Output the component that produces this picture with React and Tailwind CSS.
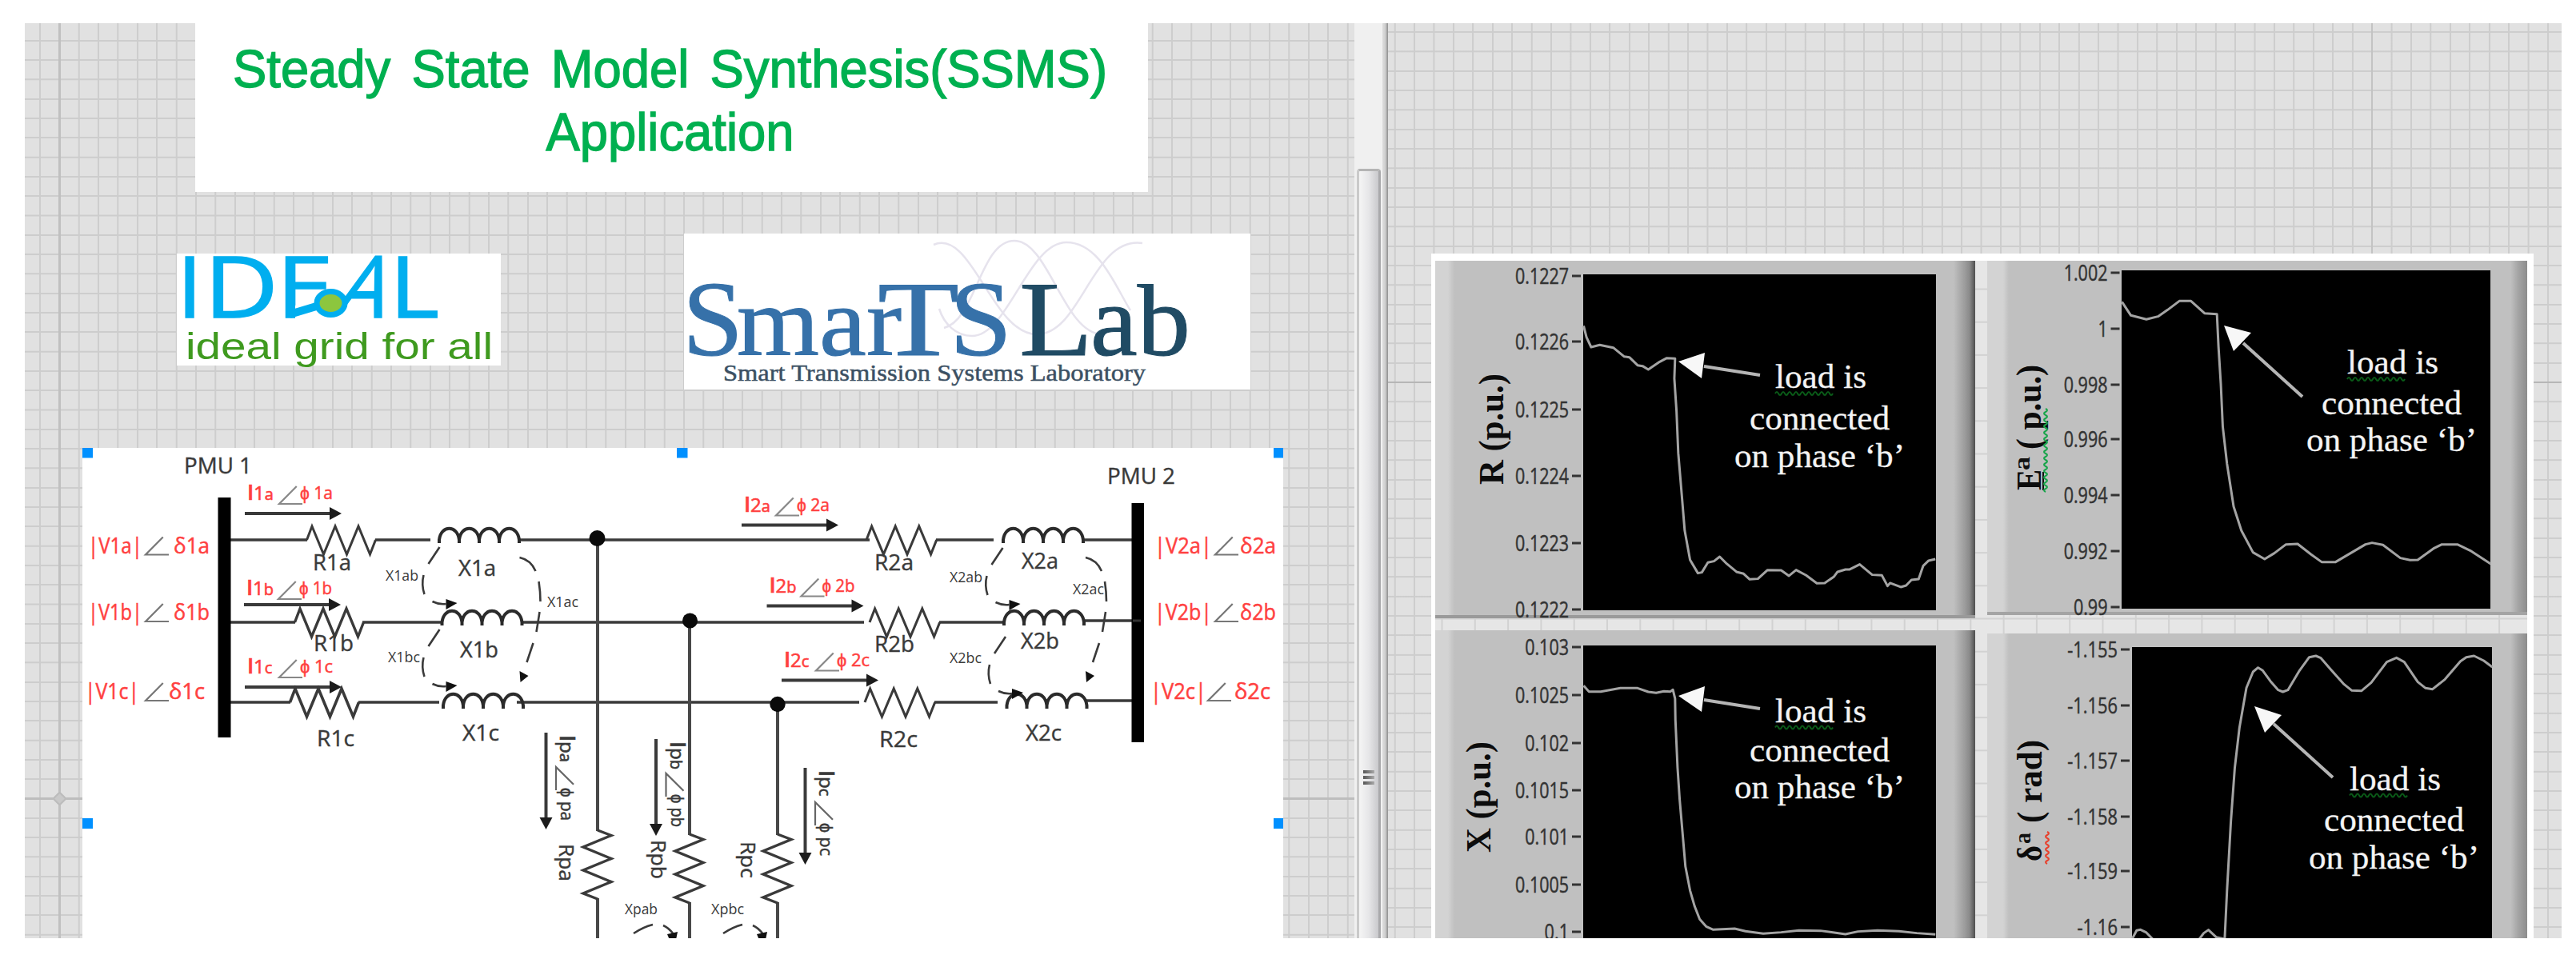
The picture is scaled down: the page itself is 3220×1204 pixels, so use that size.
import React from 'react';

const RED = '#ff4040';
const INK = '#3a3a3a';

/* Text stretched to an exact width */
function Label({ x, y, w, size = 28, fill = INK, font = 'Open Sans', children, ...rest }) {
  return (
    <text
      x={x}
      y={y}
      textLength={w}
      lengthAdjust="spacingAndGlyphs"
      fontSize={size}
      fill={fill}
      fontFamily={`"${font}", sans-serif`}
      {...rest}
    >
      {children}
    </text>
  );
}

function IdealLogo() {
  return (
    <svg className="block w-[405px] h-[140px] overflow-visible" viewBox="221 317 405 140">
      <g fill="#00aeef" stroke="#00aeef" strokeWidth="1.5" fontFamily='"Open Sans", sans-serif' fontSize="107">
        <text transform="translate(221 397) scale(1.08 1)">I</text>
        <text x="255" y="397" textLength="93" lengthAdjust="spacingAndGlyphs">D</text>
        <text x="345" y="397" textLength="72" lengthAdjust="spacingAndGlyphs">E</text>
        <path d="M369 382 L420 368 L420 402 L369 402Z" fill="#fff" stroke="none" />
        <text transform="translate(413 397) skewX(-20)" textLength="64" lengthAdjust="spacingAndGlyphs">A</text>
        <text x="487" y="397" textLength="62" lengthAdjust="spacingAndGlyphs">L</text>
      </g>
      <path d="M402 386 H430 V402 H402Z" fill="#fff" />
      <path d="M362 393 L402 381" stroke="#00aeef" strokeWidth="10" />
      <ellipse cx="413.5" cy="379" rx="17.5" ry="14.5" fill="#8cc63e" stroke="#00aeef" strokeWidth="7" />
      <Label x="232" y="449" w="384" size="47" fill="#3f9a1f" font="Liberation Sans">ideal grid for all</Label>
    </svg>
  );
}

function SmartsLogo() {
  return (
    <svg className="block w-[708px] h-[195px] overflow-visible" viewBox="855 292 708 195">
      <g fill="none" stroke="#e6e3ed" strokeWidth="2.5">
        <path d="M1167 306 C1215 285 1240 418 1296 418 S1365 295 1428 304" />
        <path d="M1180 410 C1220 400 1225 301 1268 301 S1330 418 1378 418" />
        <path d="M1174 386 C1180 405 1195 420 1215 420 C1260 420 1285 303 1333 303 C1375 303 1395 360 1413 388" />
      </g>
      <g stroke="#3671a9" strokeWidth="1">
        <Label x="853" y="444" w="76" size="134" fill="#3671a9" font="Liberation Serif">S</Label>
        <Label x="921" y="444" w="206" size="122" fill="#3671a9" font="Liberation Serif">mar</Label>
        <Label x="1097" y="444" w="102" size="134" fill="#3671a9" font="Liberation Serif">T</Label>
        <Label x="1187" y="444" w="78" size="134" fill="#3671a9" font="Liberation Serif">S</Label>
      </g>
      <g stroke="#204b64" strokeWidth="1">
        <Label x="1274" y="444" w="92" size="134" fill="#204b64" font="Liberation Serif">L</Label>
        <Label x="1363" y="444" w="125" size="128" fill="#204b64" font="Liberation Serif">ab</Label>
      </g>
      <Label x="904" y="476" w="528" size="30" fill="#3b5063" font="Liberation Serif" stroke="#3b5063" strokeWidth="0.5">
        Smart Transmission Systems Laboratory
      </Label>
    </svg>
  );
}

const Angle = ({ x, y, w = 29, h = 22, color = '#777' }) => (
  <path d={`M${x + w * 0.75} ${y - h} L${x} ${y} H${x + w}`} fill="none" stroke={color} strokeWidth="2.2" />
);

/* Branch current: label, angle and direction arrow */
function Current({ x, y, sub, arrow = 18, color = RED, rotate = 0, len = 120 }) {
  return (
    <g transform={`translate(${x} ${y}) rotate(${rotate})`}>
      <text fill={color} fontFamily='"Open Sans", sans-serif' stroke={color} strokeWidth="0.6">
        <tspan fontSize="27" x="0" y="1" fontWeight="600">I</tspan>
        <tspan fontSize="24" x="8">{sub[0]}</tspan>
        <tspan fontSize="20">{sub[1]}</tspan>
      </text>
      <Angle x={40} y={6} color={color === RED ? '#888' : '#666'} />
      <Label x="66" y="0" w="41" size="22" fill={color} stroke={color} strokeWidth="0.5">ϕ {sub}</Label>
      <path d={`M-3 ${arrow} H${len - 15}`} stroke={INK} strokeWidth="4" />
      <path d={`M${len - 17} ${arrow - 8} L${len - 2} ${arrow} L${len - 17} ${arrow + 8}Z`} fill="#1c1c1c" />
    </g>
  );
}

function Voltage({ x, y, name, ax, dx, w = 68 }) {
  return (
    <g stroke={RED} strokeWidth="0.5">
      <Label x={x} y={y} w={w} fill={RED}>{`|${name}|`}</Label>
      <Angle x={ax} y={y + 2} />
      <Label x={dx} y={y} w="45" fill={RED}>{`δ${name.slice(1)}`}</Label>
    </g>
  );
}

const Resistor = ({ x, y, rotate = 0, k = 1, width = 3 }) => (
  <path
    transform={`translate(${x} ${y}) rotate(${rotate}) scale(${k} 1)`}
    d="M0 0 L6.5 -17 L21 18 L35.5 -17 L50 18 L64.5 -17 L79 18 L86 0"
    fill="none"
    stroke={INK}
    strokeWidth={width}
  />
);

const Coil = ({ x, y }) => (
  <path
    transform={`translate(${x} ${y})`}
    d="M0 4 V0 C2 -19 23 -19 25 0 V4 V0 C27 -19 48 -19 50 0 V4 V0 C52 -19 73 -19 75 0 V4 V0 C77 -19 98 -19 100 0 V4"
    fill="none"
    stroke="#2b2b2b"
    strokeWidth="4"
  />
);

/* Dashed coupling between neighbouring phases */
const Coupling = ({ x, y }) => (
  <g transform={`translate(${x} ${y})`}>
    <path d="M0 0 L-14 21 M-20 35 Q-23 47 -19 59 M-9 68 Q-1 72 8 71" fill="none" stroke={INK} strokeWidth="2.6" />
    <path d="M8 65 L22 70 L8 78Z" fill="#111" />
  </g>
);

const LongCoupling = ({ x, y }) => (
  <g transform={`translate(${x} ${y})`}>
    <path
      d="M0 0 Q14 3 20 17 M24 30 Q26 43 26 55 M25 68 Q23 81 21 93 M17 107 L9 131"
      fill="none"
      stroke={INK}
      strokeWidth="2.6"
    />
    <path d="M0 142 L11 148 L1 156Z" fill="#111" />
  </g>
);

const ShuntCoupling = ({ x, y }) => (
  <g transform={`translate(${x} ${y})`}>
    <path d="M0 11 Q12 3 24 0 M37 1 Q44 4 50 12" fill="none" stroke={INK} strokeWidth="2.6" />
    <path d="M42 12 L55 9 L53 19 H45Z" fill="#111" />
  </g>
);

function Circuit() {
  return (
    <svg className="block w-[1501px] h-[613px]" viewBox="103 560 1501 613">
      <g stroke={INK} strokeWidth="0.4">
        <Label x="230" y="592" w="85">PMU 1</Label>
        <Label x="1384" y="605" w="85">PMU 2</Label>
      </g>

      {/* Phase conductors */}
      <g stroke={INK} strokeWidth="3.6">
        <path d="M288 675 H384 M469 675 H538 M649 675 H1087 M1170 675 H1242 M1354 675 H1416" />
        <path d="M288 778 H369 M453 778 H553 M652 778 H1080 M1174 778 H1255 M1354 776 H1416" />
        <path d="M288 878 H363 M448 878 H549 M646 878 H1074 M1168 878 H1247 M1356 876 H1416" />
        <path d="M747 675 V1039 M747 1123 V1175 M862 778 V1044 M862 1128 V1175 M972 880 V1044 M972 1128 V1175" stroke="#484848" strokeWidth="4" />
      </g>
      <rect x="272.5" y="622" width="16" height="300" fill="#000" />
      <rect x="1414.5" y="629" width="15.5" height="299" fill="#000" />
      <path d="M1416 776 H1426" stroke="#333" strokeWidth="3" />

      <Resistor x={383.5} y={675} />
      <Resistor x={368.5} y={778} width={3.4} />
      <Resistor x={362.5} y={878} width={3.6} />
      <Resistor x={1083} y={675} k={1.02} />
      <Resistor x={1087} y={778} k={1.02} />
      <Resistor x={1081} y={878} k={1.02} />
      <Resistor x={747} y={1038} rotate={90} width={3.4} />
      <Resistor x={862} y={1043} rotate={90} width={3.4} />
      <Resistor x={972} y={1043} rotate={90} width={3.4} />

      <Coil x={549} y={675} />
      <Coil x={552.5} y={778} />
      <Coil x={554} y={882} />
      <Coil x={1254} y={675} />
      <Coil x={1255} y={778} />
      <Coil x={1258.5} y={882} />

      <g fill="#0a0a0a">
        <circle cx="746.5" cy="673" r="10" />
        <circle cx="862.5" cy="776" r="9.5" />
        <circle cx="972" cy="880.5" r="9.7" />
      </g>

      <Voltage x={110} y={691.5} name="V1a" ax={182} dx={217} />
      <Voltage x={110} y={775} name="V1b" ax={182} dx={217} />
      <Voltage x={106} y={874} name="V1c" ax={182} dx={211} />
      <Voltage x={1443} y={691.5} name="V2a" ax={1519} dx={1550} w={72} />
      <Voltage x={1443} y={775} name="V2b" ax={1519} dx={1550} w={72} />
      <Voltage x={1438} y={874} name="V2c" ax={1510} dx={1543} w={70} />

      <Current x={309} y={624} sub="1a" />
      <Current x={308} y={743} sub="1b" arrow={13} />
      <Current x={309} y={841} sub="1c" />
      <Current x={930} y={638.5} sub="2a" />
      <Current x={961.5} y={739.5} sub="2b" />
      <Current x={980} y={832.5} sub="2c" />
      <Current x={701} y={919} sub="pa" arrow={18.5} color={INK} rotate={90} />
      <Current x={838.5} y={927} sub="pb" arrow={18.5} color={INK} rotate={90} />
      <Current x={1025} y={963} sub="pc" arrow={18.5} color={INK} rotate={90} />

      <g stroke={INK} strokeWidth="0.4">
        <Label x="391" y="712.5" w="48">R1a</Label>
        <Label x="392" y="813.5" w="50">R1b</Label>
        <Label x="396" y="933" w="47">R1c</Label>
        <Label x="573" y="720" w="47">X1a</Label>
        <Label x="575" y="822" w="48">X1b</Label>
        <Label x="578" y="926" w="46">X1c</Label>
        <Label x="1093" y="712.5" w="49">R2a</Label>
        <Label x="1093" y="815" w="50">R2b</Label>
        <Label x="1099" y="934" w="48">R2c</Label>
        <Label x="1277" y="710.5" w="46">X2a</Label>
        <Label x="1276" y="811" w="48">X2b</Label>
        <Label x="1282" y="926" w="45">X2c</Label>
        <Label transform="translate(699 1055) rotate(90)" w="47" size="26">Rpa</Label>
        <Label transform="translate(814 1050) rotate(90)" w="49" size="26">Rpb</Label>
        <Label transform="translate(925.5 1052) rotate(90)" w="46" size="26">Rpc</Label>
      </g>

      <Label x="482" y="726" w="41" size="19">X1ab</Label>
      <Label x="485" y="828" w="40" size="19">X1bc</Label>
      <Label x="684" y="759" w="39" size="18">X1ac</Label>
      <Label x="1187" y="728" w="41" size="19">X2ab</Label>
      <Label x="1187" y="829" w="40" size="19">X2bc</Label>
      <Label x="1341" y="743" w="39" size="18">X2ac</Label>
      <Label x="781" y="1143" w="41" size="18">Xpab</Label>
      <Label x="889" y="1143" w="41" size="18">Xpbc</Label>

      <Coupling x={549.5} y={684} />
      <Coupling x={549.5} y={787} />
      <Coupling x={1253.5} y={685} />
      <Coupling x={1257} y={796} />
      <LongCoupling x={649.5} y={697} />
      <LongCoupling x={1357} y={697} />
      <ShuntCoupling x={792} y={1156} />
      <ShuntCoupling x={904} y={1156} />

      {/* Selection handles */}
      <g fill="#0090ff">
        <rect x="103" y="560" width="13" height="12.5" />
        <rect x="846" y="560" width="13.5" height="12.5" />
        <rect x="1592" y="560" width="12" height="12.5" />
        <rect x="103" y="1023" width="13" height="13" />
        <rect x="1592" y="1023" width="12" height="13" />
      </g>
    </svg>
  );
}

const wave = (n) => 'm0 0' + ' q2 -4 4 0 t4 0'.repeat(n);

/* Plot with its scale. "note" is the left edge and the three baselines of the remark. */
function Chart({ className, box, plot, ticks, labelRight, trace, traceTransform, note, arrow, children }) {
  const [px, py, pw, ph] = plot;
  const [nx, n1, n2, n3] = note;
  const [tip, b1, b2, from, to] = arrow;
  return (
    <svg className={className} viewBox={box}>
      <rect x={px} y={py} width={pw} height={ph} fill="#000" />
      {ticks.map(([label, y]) => {
        const w = label.replace(/[.-]/g, '').length * 12.2 + 6 + (label[0] === '-' ? 8 : 0);
        return (
          <g key={label} stroke="#333">
            <Label x={label === '1' ? labelRight - 12 : labelRight - w} y={y + 10} w={label === '1' ? 12 : w} size="27" fill="#333" strokeWidth="0.5">
              {label}
            </Label>
            <path d={`M${labelRight + 4} ${y} h11`} strokeWidth="3" />
          </g>
        );
      })}
      <polyline
        points={trace}
        transform={traceTransform}
        fill="none"
        stroke="#a4a4a4"
        strokeWidth="3"
        strokeLinejoin="round"
        vectorEffect="non-scaling-stroke"
      />
      <path d={`M${from} L${to}`} stroke="#b5b5b5" strokeWidth="4" />
      <path d={`M${tip} L${b1} L${b2}Z`} fill="#f7f7f7" />
      <g stroke="#f4f4f4" strokeWidth="0.3">
        <Label x={nx + 51} y={n1} w="114" size="43" fill="#f4f4f4" font="Liberation Serif">load is</Label>
        <Label x={nx + 19} y={n2} w="175" size="43" fill="#f4f4f4" font="Liberation Serif">connected</Label>
        <Label x={nx} y={n3} w="213" size="43" fill="#f4f4f4" font="Liberation Serif">on phase ‘b’</Label>
      </g>
      <path transform={`translate(${nx + 51} ${n1 + 7})`} d={wave(9)} fill="none" stroke="#0a5a18" strokeWidth="2" />
      {children}
    </svg>
  );
}

function AxisName({ x, y, w, children }) {
  return (
    <Label
      transform={`translate(${x} ${y}) rotate(-90)`}
      w={w}
      size="45"
      fill="#0c0c0c"
      font="Liberation Serif"
      fontWeight="bold"
    >
      {children}
    </Label>
  );
}

const R_TRACE =
  '447,322 455,365 468,402 492,394 530,404 560,437 575,440 598,470 612,473 628,486 660,457 680,443 703,445 701,520 707,640 712,800 722,960 730,1090 745,1200 767,1250 778,1247 795,1210 812,1205 828,1188 848,1215 875,1245 895,1252 912,1273 935,1271 962,1238 1000,1239 1022,1260 1042,1238 1070,1258 1100,1288 1122,1287 1148,1263 1158,1245 1180,1236 1192,1236 1220,1217 1255,1256 1282,1258 1298,1298 1305,1287 1335,1302 1350,1296 1365,1275 1385,1272 1398,1222 1413,1203 1432,1197';
const X_TRACE =
  '447,292 462,314 495,314 550,301 598,301 628,315 650,319 672,313 690,314 697,307 703,340 704,420 710,600 716,720 725,860 732,970 745,1060 758,1120 772,1168 790,1195 810,1207 870,1203 900,1213 950,1222 1000,1217 1050,1210 1110,1211 1180,1224 1215,1214 1270,1210 1330,1213 1380,1220 1432,1225';
const E_TRACE =
  '397,232 420,283 460,298 490,287 515,262 545,229 575,229 610,275 642,278 646,400 652,540 657,700 668,840 685,1000 705,1090 735,1172 765,1197 790,1175 820,1142 850,1140 885,1180 912,1208 948,1208 990,1172 1025,1142 1042,1136 1070,1144 1115,1193 1140,1201 1160,1200 1200,1158 1222,1142 1262,1142 1295,1165 1348,1215';
const D_TRACE =
  '424,1240 435,1210 445,1207 460,1218 478,1245 595,1245 608,1220 620,1208 640,1235 662,1242 668,1060 678,800 688,600 700,450 718,300 735,240 748,224 760,235 780,275 800,308 812,315 825,308 855,235 880,185 897,180 910,188 935,230 970,287 990,310 1015,311 1040,280 1080,203 1105,187 1125,203 1160,278 1180,301 1198,305 1230,268 1270,200 1285,185 1305,180 1330,198 1352,222';

export default function App() {
  return (
    <div className="w-[3220px] h-[1204px] bg-white pt-[29px] pl-[31px] overflow-hidden">
      <div className="flex w-[3171px] h-[1144px] overflow-hidden">
        {/* Left canvas */}
        <div className="relative flex flex-col w-[1662px] shrink-0 bg-[#e1e1e1] bg-[repeating-linear-gradient(to_right,transparent_0px,transparent_17.6px,#cdcdcd_18px,#cdcdcd_19.6px,transparent_20px,transparent_24.4px),repeating-linear-gradient(to_bottom,transparent_0px,transparent_20.6px,#cdcdcd_21px,#cdcdcd_22.6px,transparent_23px,transparent_24.3px)]">
          <div className="absolute left-[42px] top-0 w-[3px] h-full bg-[#c0c0c0]" />
          <div className="absolute left-0 top-[968px] w-full h-[3px] bg-[#bdbdbd]" />
          <div className="absolute left-[37px] top-[963px] w-[13px] h-[13px] rotate-45 border-2 border-[#bcbcbc] bg-[#c9c9c9]" />

          <div className="relative shrink-0 ml-[213px] w-[1191px] h-[211px] bg-white pt-[18px] text-center font-['Liberation_Sans',sans-serif] text-[66px] leading-[79px] text-[#00b050] [-webkit-text-stroke:1.4px_#00b050]">
            <div className="-ml-[4px] scale-x-[0.96] whitespace-nowrap [word-spacing:9px]">Steady State Model Synthesis(SSMS)</div>
            <div className="-ml-[4px] scale-x-[0.96]">Application</div>
          </div>

          <div className="relative shrink-0 flex items-start h-[320px] pl-[190px] gap-[229px]">
            <div className="mt-[77px] bg-white">
              <IdealLogo />
            </div>
            <div className="mt-[52px] bg-white">
              <SmartsLogo />
            </div>
          </div>

          <div className="relative shrink-0 ml-[72px] w-[1501px] bg-white">
            <Circuit />
          </div>
        </div>

        {/* Scrollbar */}
        <div className="flex w-[35px] shrink-0 bg-[#f0f0f0] pt-[182px] pl-[3px] pr-[2px]">
          <div className="flex flex-1 flex-col items-center border-t-3 border-l-3 border-r-3 border-t-[#b4b4b4] border-l-[#cacaca] border-r-[#a9a9ab] rounded-t-sm bg-linear-to-r from-[#f5f5f5] via-[#e6e6e8] to-[#c9c9cc] pt-[749px]">
            <div className="flex flex-col gap-[3px]">
              <div className="w-[14px] h-[4px] bg-linear-to-r from-[#555] to-[#aaa]" />
              <div className="w-[14px] h-[4px] bg-linear-to-r from-[#555] to-[#aaa]" />
              <div className="w-[14px] h-[4px] bg-linear-to-r from-[#555] to-[#aaa]" />
            </div>
          </div>
        </div>
        <div className="w-[7px] shrink-0 bg-linear-to-r from-[#dedede] via-[#cfcfcf] to-[#8f8f8f]" />

        {/* Right canvas */}
        <div className="relative flex w-[1467px] shrink-0 bg-[#e1e1e1] pl-[54px] pt-[288px] bg-[repeating-linear-gradient(to_right,transparent_0px,transparent_7.4px,#cdcdcd_7.8px,#cdcdcd_9.4px,transparent_9.8px,transparent_24.43px),repeating-linear-gradient(to_bottom,transparent_0px,transparent_9.9px,#cdcdcd_10.3px,#cdcdcd_11.9px,transparent_12.3px,transparent_24.33px)]">
          <div className="absolute left-0 top-[448px] w-full h-[2px] bg-[#b6b6b6]" />
          <div className="absolute left-[1229px] top-0 w-[2px] h-full bg-[#c3c3c3]" />

          <div className="relative flex gap-[15px] w-[1378px] h-[870px] shrink-0 border-t-[9px] border-l-[5px] border-r-[8px] border-white bg-[#e6e6e6] bg-[repeating-linear-gradient(to_right,transparent_0px,transparent_7px,#d2d2d2_8px,#d2d2d2_9px,transparent_10px,transparent_41.3px),repeating-linear-gradient(to_bottom,transparent_0px,transparent_34px,#d2d2d2_35px,#d2d2d2_36px,transparent_37px,transparent_41.2px)]">
            <div className="flex flex-col gap-[15px] w-[675px] shrink-0">
              <div className="h-[447px] shrink-0 border-b-4 border-[#9a9a9a] bg-[linear-gradient(to_right,#d3d3d3_0px,#d3d3d3_16px,#c0c0c0_24px,#c0c0c0_648px,#9c9c9c_662px,#8a8a8a_668px,#4f4f4f_675px)]">
                <Chart
                  className="block w-[675px] h-[443px] overflow-visible"
                  box="1794 326 675 443"
                  plot={[1979, 343, 441, 420]}
                  labelRight={1961}
                  ticks={[['0.1227', 345], ['0.1226', 427], ['0.1225', 512], ['0.1224', 595], ['0.1223', 679], ['0.1222', 762]]}
                  trace={R_TRACE}
                  traceTransform="translate(1780 300) scale(0.4464 0.3333)"
                  note={[2168, 485, 537, 584]}
                  arrow={['2098 452', '2131 441', '2127 473', '2130 458', '2200 469']}
                >
                  <AxisName x={1879} y={606} w={139}>R (p.u.)</AxisName>
                </Chart>
              </div>
              <div className="h-[400px] shrink-0 bg-[linear-gradient(to_right,#d3d3d3_0px,#d3d3d3_16px,#c0c0c0_24px,#c0c0c0_648px,#9c9c9c_662px,#8a8a8a_668px,#4f4f4f_675px)]">
                <Chart
                  className="block w-[675px] h-[400px]"
                  box="1794 788 675 400"
                  plot={[1979, 807, 441, 400]}
                  labelRight={1961}
                  ticks={[['0.103', 809], ['0.1025', 869], ['0.102', 929], ['0.1015', 988], ['0.101', 1046], ['0.1005', 1106], ['0.1', 1165]]}
                  trace={X_TRACE}
                  traceTransform="translate(1780 760) scale(0.4464 0.3333)"
                  note={[2168, 902.5, 952, 998]}
                  arrow={['2098 870', '2131 858', '2127 890', '2130 875', '2200 886']}
                >
                  <AxisName x={1863} y={1066} w={139}>X (p.u.)</AxisName>
                </Chart>
              </div>
            </div>

            <div className="flex flex-col gap-[23px] w-[675px] shrink-0">
              <div className="h-[443px] shrink-0 border-b-4 border-[#a4a4a4] bg-[linear-gradient(to_right,#d3d3d3_0px,#d3d3d3_20px,#c0c0c0_27px,#c0c0c0_654px,#a4a4a4_664px,#8c8c8c_675px)]">
                <Chart
                  className="block w-[675px] h-[439px] overflow-visible"
                  box="2484 326 675 439"
                  plot={[2652, 338, 461, 423]}
                  labelRight={2634.5}
                  ticks={[['1.002', 341], ['1', 411], ['0.998', 481], ['0.996', 549], ['0.994', 619], ['0.992', 689], ['0.99', 759]]}
                  trace={E_TRACE}
                  traceTransform="translate(2460 300) scale(0.4847 0.3333)"
                  note={[2883, 467, 517.5, 564]}
                  arrow={['2780 407', '2814 416', '2792 439', '2804 429', '2878 496']}
                >
                  <AxisName x={2551} y={613} w={26}>E</AxisName>
                  <Label transform="translate(2537 588) rotate(-90)" w="17" size="30" fill="#111" font="Liberation Serif" fontWeight="bold">a</Label>
                  <AxisName x={2551} y={562} w={106}>( p.u.)</AxisName>
                  <path d="M2554 613 V590" stroke="#111" strokeWidth="2" />
                  <path transform="translate(2557 615) rotate(-90)" d={wave(13)} fill="none" stroke="#17a54a" strokeWidth="2" />
                </Chart>
              </div>
              <div className="h-[400px] shrink-0 bg-[linear-gradient(to_right,#d3d3d3_0px,#d3d3d3_20px,#c0c0c0_27px,#c0c0c0_654px,#a4a4a4_664px,#8c8c8c_675px)]">
                <Chart
                  className="block w-[675px] h-[400px]"
                  box="2484 792 675 400"
                  plot={[2665, 809, 450, 400]}
                  labelRight={2647}
                  ticks={[['-1.155', 812], ['-1.156', 882], ['-1.157', 951], ['-1.158', 1021], ['-1.159', 1089], ['-1.16', 1159]]}
                  trace={D_TRACE}
                  traceTransform="translate(2460 760) scale(0.4847 0.3333)"
                  note={[2886, 987.5, 1039, 1086]}
                  arrow={['2818 883', '2852 894', '2831 916', '2842 905', '2916 972']}
                >
                  <AxisName x={2552} y={1077} w={20}>δ</AxisName>
                  <Label transform="translate(2538 1055) rotate(-90)" w="14" size="30" fill="#111" font="Liberation Serif" fontWeight="bold">a</Label>
                  <AxisName x={2552} y={1029} w={104}>( rad)</AxisName>
                  <path transform="translate(2559 1080) rotate(-90)" d={wave(5)} fill="none" stroke="#e8402c" strokeWidth="2" />
                </Chart>
              </div>
            </div>
          </div>
        </div>
      </div>
    </div>
  );
}
